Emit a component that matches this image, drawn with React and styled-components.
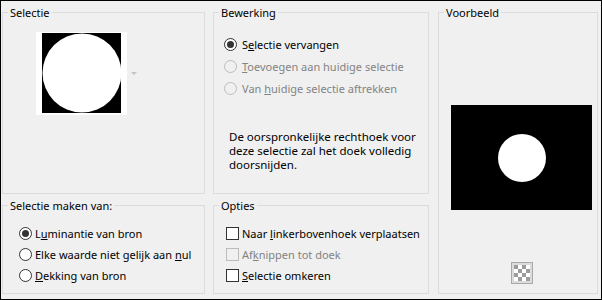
import React from 'react';
import styled, {createGlobalStyle} from 'styled-components';

const GlobalStyle = createGlobalStyle`
    html, body {
        margin: 0;
        padding: 0;
        background: #f0f0f0;
    }
    * {
        box-sizing: border-box;
    }
`;

const Dialog = styled.div`
    width: 602px;
    height: 300px;
    border: 1px solid #000;
    background: #f0f0f0;
    padding: 4px 2px 5px 1px;
    display: grid;
    grid-template-columns: 203px 216px 161px;
    grid-template-rows: 189px 96px;
    column-gap: 8px;
    row-gap: 4px;
    font-family: "Segoe UI", "Noto Sans", sans-serif;
    font-size: 11px;
    color: #000;
`;

const Group = styled.fieldset`
    margin: 0;
    padding: 0;
    min-width: 0;
    border: 1px solid #dcdcdc;
`;

const PreviewGroup = styled(Group)`
    grid-column: 3;
    grid-row: 1 / span 2;
    margin-left: 1px;
`;

const Legend = styled.legend`
    margin-left: 5px;
    padding: 0 2px;
    line-height: 15px;
    font-size: 11px;
`;

const ThumbArea = styled.div`
    display: flex;
    align-items: center;
    gap: 4px;
    padding: 12px 0 0 33px;
`;

const Arrow = styled.span`
    width: 0;
    height: 0;
    border-left: 3px solid transparent;
    border-right: 3px solid transparent;
    border-top: 3px solid #c4c4c4;
`;

const OptionList = styled.div`
    display: flex;
    flex-direction: column;
    padding: ${p => p.$pad};
`;

const Row = styled.label`
    display: flex;
    align-items: center;
    gap: ${p => p.$gap || 4}px;
    height: ${p => p.$h}px;
    line-height: 15px;
    color: ${p => p.$disabled ? '#838383' : '#000'};
    white-space: nowrap;
`;

const Radio = styled.span`
    width: 13px;
    height: 13px;
    flex: none;
    border-radius: 50%;
    border: 1px solid ${p => p.$disabled ? '#bcbcbc' : '#333'};
    background: ${p => p.$disabled ? '#f0f0f0' : '#fff'};
    display: flex;
    align-items: center;
    justify-content: center;
    &::after {
        content: '';
        width: 7px;
        height: 7px;
        border-radius: 50%;
        background: #333;
        display: ${p => p.$checked ? 'block' : 'none'};
    }
`;

const Check = styled.span`
    width: 13px;
    height: 13px;
    flex: none;
    border: 1px solid ${p => p.$disabled ? '#bcbcbc' : '#333'};
    background: ${p => p.$disabled ? '#f0f0f0' : '#fff'};
`;

const Note = styled.p`
    margin: 31px 0 0 15px;
    font-size: 11.5px;
    line-height: 14px;
    width: 190px;
`;

const PreviewArea = styled.div`
    display: flex;
    flex-direction: column;
    align-items: center;
    padding: 85px 0 0 7px;
`;

const CheckerButton = styled.div`
    margin-top: 52px;
    width: 22px;
    height: 22px;
    border: 1px solid #a8a8a8;
    background: #dcdcdc;
    display: flex;
    align-items: center;
    justify-content: center;
`;

function Thumbnail() {
    return (
        <svg width="91" height="83" viewBox="0 0 91 83">
            <rect width="91" height="83" fill="#fff"/>
            <rect x="6" y="1" width="79" height="80" fill="#000"/>
            <circle cx="46" cy="41" r="39.5" fill="#fff"/>
        </svg>
    );
}

function PreviewImage() {
    return (
        <svg width="141" height="105" viewBox="0 0 141 105">
            <rect width="141" height="105" fill="#000"/>
            <circle cx="71" cy="53" r="24" fill="#fff"/>
        </svg>
    );
}

function Checker() {
    const cells = [];
    for (let r = 0; r < 4; r++) {
        for (let c = 0; c < 4; c++) {
            cells.push(<rect key={r + '-' + c} x={c * 4} y={r * 4} width="4" height="4" fill={(r + c) % 2 ? '#fff' : '#9c9c9c'}/>);
        }
    }
    return <svg width="16" height="16" viewBox="0 0 16 16">{cells}</svg>;
}

export default function App() {
    return (
        <>
            <GlobalStyle/>
            <Dialog>
                <Group>
                    <Legend>Selectie</Legend>
                    <ThumbArea>
                        <Thumbnail/>
                        <Arrow/>
                    </ThumbArea>
                </Group>
                <Group>
                    <Legend>Bewerking</Legend>
                    <OptionList $pad="13px 0 0 10px">
                        <Row $h={22} $gap={5}><Radio $checked/><span>S<u>e</u>lectie vervangen</span></Row>
                        <Row $h={22} $gap={5} $disabled><Radio $disabled/><span><u>T</u>oevoegen aan huidige selectie</span></Row>
                        <Row $h={22} $gap={5} $disabled><Radio $disabled/><span>Van <u>h</u>uidige selectie aftrekken</span></Row>
                    </OptionList>
                    <Note>De oorspronkelijke rechthoek voor deze selectie zal het doek volledig doorsnijden.</Note>
                </Group>
                <PreviewGroup>
                    <Legend>Voorbeeld</Legend>
                    <PreviewArea>
                        <PreviewImage/>
                        <CheckerButton><Checker/></CheckerButton>
                    </PreviewArea>
                </PreviewGroup>
                <Group>
                    <Legend>Selectie maken van:</Legend>
                    <OptionList $pad="10px 0 0 16px">
                        <Row $h={21} $gap={3}><Radio $checked/><span>L<u>u</u>minantie van bron</span></Row>
                        <Row $h={21} $gap={3}><Radio/><span>Elke waarde niet gelijk aan <u>n</u>ul</span></Row>
                        <Row $h={21} $gap={3}><Radio/><span><u>D</u>ekking van bron</span></Row>
                    </OptionList>
                </Group>
                <Group>
                    <Legend>Opties</Legend>
                    <OptionList $pad="10px 0 0 12px">
                        <Row $h={21} $gap={3}><Check/><span>Naar <u>l</u>inkerbovenhoek verplaatsen</span></Row>
                        <Row $h={21} $gap={3} $disabled><Check $disabled/><span>Af<u>k</u>nippen tot doek</span></Row>
                        <Row $h={21} $gap={3}><Check/><span><u>S</u>electie omkeren</span></Row>
                    </OptionList>
                </Group>
            </Dialog>
        </>
    );
}
